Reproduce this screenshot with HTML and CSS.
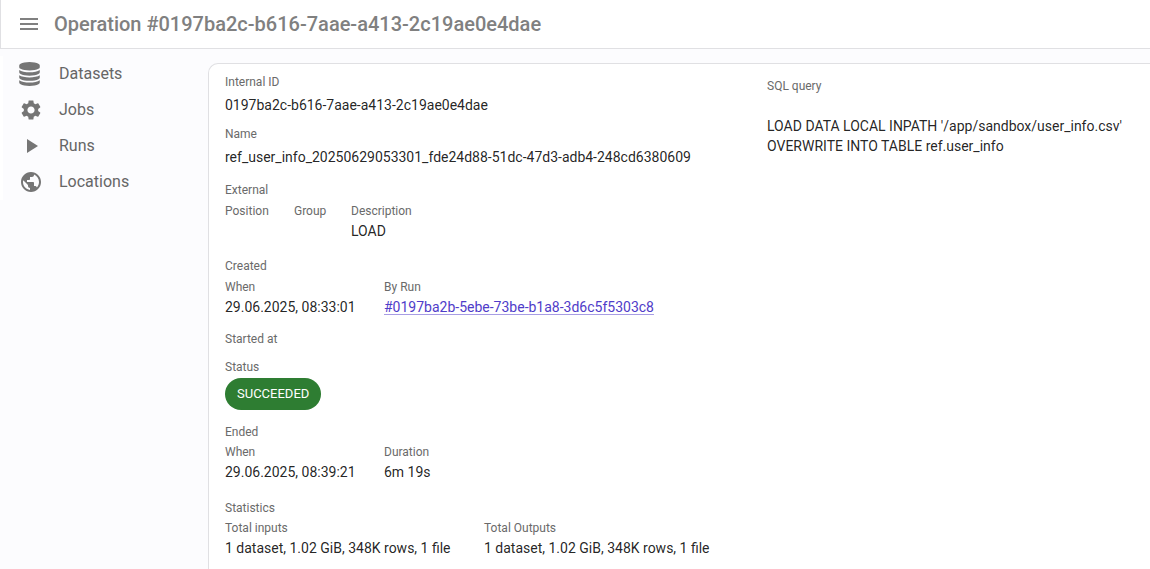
FILE: index.html
```html
<!DOCTYPE html>
<html lang="en">
<head>
<meta charset="utf-8">
<title>Operation</title>
<link rel="stylesheet" href="styles.css">
</head>
<body>
<header class="topbar">
  <button class="menu-button" type="button" aria-label="Toggle menu">
    <svg class="icon" viewBox="0 0 24 24"><path d="M3 18h18v-2H3v2zm0-5h18v-2H3v2zm0-7v2h18V6H3z"/></svg>
  </button>
  <h1 class="title">Operation #0197ba2c-b616-7aae-a413-2c19ae0e4dae</h1>
</header>
<div class="layout">
  <nav class="sidebar">
    <a class="nav-item" href="#datasets">
      <svg class="icon icon-database" viewBox="0 0 1536 1792"><path d="M768 768q237 0 443-43t325-127v170q0 69-103 128t-280 93.500-385 34.500-385-34.500-280-93.500-103-128v-170q119 84 325 127t443 43zm0 768q237 0 443-43t325-127v170q0 69-103 128t-280 93.500-385 34.500-385-34.500-280-93.500-103-128v-170q119 84 325 127t443 43zm0-384q237 0 443-43t325-127v170q0 69-103 128t-280 93.500-385 34.500-385-34.500-280-93.500-103-128v-170q119 84 325 127t443 43zm0-1152q208 0 385 34.500t280 93.500 103 128v128q0 69-103 128t-280 93.500-385 34.500-385-34.500-280-93.500-103-128v-128q0-69 103-128t280-93.500 385-34.500z"/></svg>
      <span>Datasets</span>
    </a>
    <a class="nav-item" href="#jobs">
      <svg class="icon" viewBox="0 0 24 24"><path d="M19.140 12.940c.04-.3.060-.61.060-.94 0-.32-.02-.64-.07-.94l2.030-1.580c.18-.14.230-.41.120-.61l-1.920-3.320c-.12-.22-.37-.29-.59-.22l-2.390.96c-.5-.38-1.030-.7-1.620-.94l-.36-2.540c-.04-.24-.24-.41-.48-.41h-3.840c-.24 0-.43.17-.47.410l-.36 2.540c-.59.24-1.130.57-1.620.94l-2.390-.96c-.22-.08-.47 0-.59.22L2.740 8.870c-.12.210-.08.470.120.610l2.030 1.580c-.05.3-.09.63-.09.94s.02.640.07.940l-2.030 1.580c-.18.14-.23.410-.12.610l1.920 3.320c.12.220.37.290.59.220l2.390-.96c.5.380 1.030.7 1.620.94l.36 2.540c.05.240.24.410.48.410h3.840c.24 0 .44-.17.470-.41l.36-2.540c.59-.24 1.130-.56 1.620-.94l2.390.96c.22.080.47 0 .59-.22l1.920-3.320c.12-.22.070-.47-.12-.61l-2.010-1.580zM12 15.600c-1.980 0-3.600-1.620-3.600-3.600s1.620-3.600 3.600-3.600 3.600 1.620 3.600 3.600-1.620 3.600-3.600 3.600z"/></svg>
      <span>Jobs</span>
    </a>
    <a class="nav-item" href="#runs">
      <svg class="icon" viewBox="0 0 24 24"><path d="M8 5v14l11-7z"/></svg>
      <span>Runs</span>
    </a>
    <a class="nav-item" href="#locations">
      <svg class="icon" viewBox="0 0 24 24"><path d="M12 2C6.480 2 2 6.480 2 12s4.480 10 10 10 10-4.480 10-10S17.520 2 12 2zm-1 17.930c-3.950-.49-7-3.850-7-7.930 0-.62.080-1.210.210-1.790L9 15v1c0 1.100.9 2 2 2v1.930zm6.900-2.540c-.26-.81-1-1.390-1.900-1.390h-1v-3c0-.55-.45-1-1-1H8v-2h2c.55 0 1-.45 1-1V7h2c1.100 0 2-.9 2-2v-.41c2.930 1.190 5 4.060 5 7.410 0 2.080-.8 3.970-2.100 5.390z"/></svg>
      <span>Locations</span>
    </a>
  </nav>
  <main class="card">
    <div class="details">
      <section class="field">
        <h2 class="label">Internal ID</h2>
        <p class="value">0197ba2c-b616-7aae-a413-2c19ae0e4dae</p>
      </section>
      <section class="field">
        <h2 class="label">Name</h2>
        <p class="value">ref_user_info_20250629053301_fde24d88-51dc-47d3-adb4-248cd6380609</p>
      </section>
      <section class="group spaced">
        <h2 class="label">External</h2>
        <div class="row external">
          <div><h3 class="label">Position</h3></div>
          <div><h3 class="label">Group</h3></div>
          <div><h3 class="label">Description</h3><p class="value">LOAD</p></div>
        </div>
      </section>
      <section class="group spaced">
        <h2 class="label">Created</h2>
        <div class="row dates">
          <div><h3 class="label">When</h3><p class="value">29.06.2025, 08:33:01</p></div>
          <div><h3 class="label">By Run</h3><p class="value"><a class="link" href="#run">#0197ba2b-5ebe-73be-b1a8-3d6c5f5303c8</a></p></div>
        </div>
      </section>
      <section class="started">
        <h2 class="label">Started at</h2>
      </section>
      <section class="status">
        <h2 class="label">Status</h2>
        <span class="chip">SUCCEEDED</span>
      </section>
      <section class="group">
        <h2 class="label">Ended</h2>
        <div class="row dates">
          <div><h3 class="label">When</h3><p class="value">29.06.2025, 08:39:21</p></div>
          <div><h3 class="label">Duration</h3><p class="value">6m 19s</p></div>
        </div>
      </section>
      <section class="group">
        <h2 class="label">Statistics</h2>
        <div class="row totals">
          <div><h3 class="label">Total inputs</h3><p class="value">1 dataset, 1.02 GiB, 348K rows, 1 file</p></div>
          <div><h3 class="label">Total Outputs</h3><p class="value">1 dataset, 1.02 GiB, 348K rows, 1 file</p></div>
        </div>
      </section>
    </div>
    <section class="query">
      <h2 class="label">SQL query</h2>
      <pre class="value sql">LOAD DATA LOCAL INPATH '/app/sandbox/user_info.csv'
OVERWRITE INTO TABLE ref.user_info</pre>
    </section>
  </main>
</div>
</body>
</html>
```

FILE: styles.css
```css
* {
  box-sizing: border-box;
}

body {
  margin: 0;
  height: 100vh;
  display: flex;
  flex-direction: column;
  overflow: hidden;
  background: #fcfcfe;
  color: rgba(0, 0, 0, 0.87);
  font-family: Roboto, "Liberation Sans", sans-serif;
  font-size: 14px;
  line-height: 20px;
}

h1, h2, h3, p, pre {
  margin: 0;
}

.topbar {
  flex: none;
  display: flex;
  align-items: center;
  gap: 13px;
  height: 49px;
  padding-left: 16px;
  background: #fff;
  border-left: 1px solid #e0e0e3;
  border-bottom: 1px solid #e0e0e3;
  color: #808080;
}

.menu-button {
  display: flex;
  padding: 0;
  border: 0;
  background: none;
  color: inherit;
  cursor: pointer;
}

.icon {
  display: block;
  width: 24px;
  height: 24px;
  fill: currentColor;
}

.title {
  font-size: 20px;
  font-weight: 500;
  line-height: 32px;
}

.layout {
  flex: 1;
  min-height: 0;
  display: flex;
}

.sidebar {
  flex: none;
  align-self: flex-start;
  width: 208px;
  margin-top: 7px;
  padding-left: 16px;
  border-left: 3px solid #fff;
}

.nav-item {
  display: flex;
  align-items: center;
  gap: 16px;
  height: 36px;
  color: #666;
  font-size: 16px;
  text-decoration: none;
}

.nav-item .icon {
  color: #757575;
}

.nav-item .icon-database {
  width: 21px;
  margin-right: 3px;
}

.card {
  flex: 1;
  min-width: 0;
  display: grid;
  grid-template-columns: minmax(0, 542px) 1fr;
  align-items: start;
  margin-top: 14px;
  padding: 8px 0 16px 16px;
  background: #fff;
  border: 1px solid #e0e0e3;
  border-right: 0;
  border-bottom: 0;
  border-top-left-radius: 10px;
}

.label {
  color: #6a6a6a;
  font-size: 12px;
  font-weight: 400;
  line-height: 20px;
}

.field {
  display: grid;
  gap: 3px;
  margin-bottom: 9px;
}

.group {
  margin-bottom: 16px;
}

.spaced {
  display: grid;
  gap: 1px;
  margin-top: 13px;
  margin-bottom: 15px;
}

.row {
  display: grid;
  justify-content: start;
  gap: 24px;
  white-space: nowrap;
}

.external {
  grid-template-columns: minmax(45px, auto) minmax(33px, auto) auto;
}

.dates {
  grid-template-columns: minmax(135px, auto) auto;
}

.totals {
  grid-template-columns: minmax(235px, auto) auto;
}

.started {
  margin: -3px 0 8px;
}

.status {
  margin-bottom: 12px;
}

.chip {
  display: flex;
  width: fit-content;
  padding: 6px 12px;
  margin-top: 1px;
  border-radius: 16px;
  background: #2e7d32;
  color: #fff;
  font-size: 13px;
}

.link {
  color: #4f3cc9;
  text-underline-offset: 2px;
  text-decoration-color: rgba(79, 60, 201, 0.5);
}

.query {
  padding-top: 4px;
}

.sql {
  margin-top: 20px;
  font-family: inherit;
}
```
